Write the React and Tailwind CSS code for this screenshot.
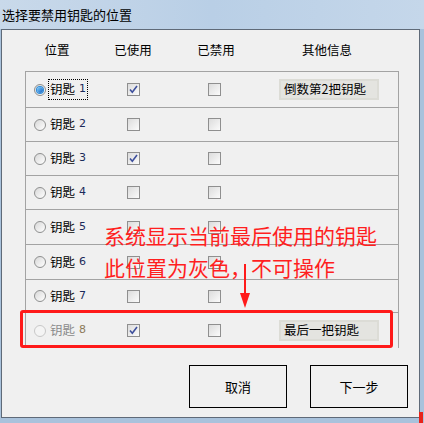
const rows = [
  { n: 1, used: true, info: "倒数第2把钥匙", selected: true, h: "h-[36px]" },
  { n: 2, used: false, h: "h-[34px]" },
  { n: 3, used: true, h: "h-[34px]" },
  { n: 4, used: false, h: "h-[34px]" },
  { n: 5, used: false, h: "h-[35px]" },
  { n: 6, used: false, h: "h-[35px]" },
  { n: 7, used: false, h: "h-[33px]" },
];

const cjk = { fontFamily: '"Noto Sans CJK SC", "Liberation Sans", sans-serif' };

const Radio = ({ checked, disabled }) => (
  <span
    className={`flex h-[12px] w-[12px] items-center justify-center rounded-full border ${
      disabled ? "border-[#c8c8c8] bg-[#f4f4f4]" : "border-[#8e8f8f] bg-gradient-to-br from-[#d8d8d8] to-[#ffffff]"
    }`}
  >
    {checked && (
      <span className="h-[6px] w-[6px] rounded-full bg-gradient-to-br from-[#7fd0ff] to-[#0b5fbf] ring-1 ring-[#2a8ad8]" />
    )}
  </span>
);

const Check = ({ checked }) => (
  <span className="flex h-[13px] w-[13px] items-center justify-center border border-[#8f8f8f] bg-gradient-to-br from-[#dcdcdc] to-[#fbfbfb]">
    {checked && (
      <svg width="9" height="9" viewBox="0 0 9 9">
        <path d="M1 4.5 L3.3 7.2 L8 1" fill="none" stroke="#3d4f9c" strokeWidth="1.6" />
      </svg>
    )}
  </span>
);

const InfoBox = ({ text }) => (
  <div className="flex h-[21px] w-[100px] items-center border-2 border-[#dcdcd6] bg-[#e4e4e0] pl-[3px] text-[12.5px] text-black">
    {text}
  </div>
);

const Row = ({ r, disabled }) => (
  <div className={`flex ${r.h} w-[374px] items-center border-x border-t border-[#a3a3a3]`}>
    <div className="flex w-[101px] items-center pl-[8px]">
      <Radio checked={r.selected} disabled={disabled} />
      <span
        className={`ml-[3px] flex items-center px-[1px] text-[12.5px] ${
          r.selected ? "outline outline-1 outline-dotted outline-black" : ""
        } ${disabled ? "text-[#8a8a8a]" : "text-black"}`}
      >
        钥匙
        <span className={`ml-[4px] text-[11px] ${disabled ? "text-[#8c7a5a]" : "text-[#1b2a5a]"}`} style={{ fontFamily: '"DejaVu Sans", sans-serif' }}>
          {r.n}
        </span>
      </span>
    </div>
    <div className="w-[81px]">
      <Check checked={r.used} />
    </div>
    <div className="w-[71px]">
      <Check />
    </div>
    {r.info && <InfoBox text={r.info} />}
  </div>
);

export default function App() {
  return (
    <div className="relative h-[423px] w-[424px] overflow-hidden bg-[#a9c2dc]" style={cjk}>
      <div className="flex h-[29px] items-center bg-gradient-to-r from-[#c9d9ea] via-[#b9cfe6] to-[#c5d7ea] pl-[2px] text-[13px] text-black">
        选择要禁用钥匙的位置
      </div>
      <div className="ml-[1px] flex h-[389px] w-[419px] flex-col border border-[#5f6a78] bg-[#f0f0f0]">
        <div className="flex h-[41px] items-center pl-[23px] text-[12.5px] text-black">
          <span className="w-[64px] text-center">位置</span>
          <span className="w-[88px] text-center">已使用</span>
          <span className="w-[78px] text-center">已禁用</span>
          <span className="w-[144px] text-center">其他信息</span>
        </div>
        <div className="flex flex-col pl-[23px]">
          {rows.map((r) => (
            <Row key={r.n} r={r} />
          ))}
          <Row r={{ n: 8, used: true, info: "最后一把钥匙", h: "h-[36px]" }} disabled />
        </div>
        <div className="mt-[17px] flex gap-[23px] pl-[187px]">
          <button className="h-[43px] w-[98px] border border-black bg-[#f0f0f0] text-[13px] text-black">取消</button>
          <button className="h-[43px] w-[98px] border border-black bg-[#f0f0f0] text-[13px] text-black">下一步</button>
        </div>
      </div>

      {/* annotations */}
      <div className="pointer-events-none absolute left-[20px] top-[310px] h-[38px] w-[373px] rounded-[3px] border-[3px] border-[#ff1a1a]" />
      <div className="pointer-events-none absolute left-[104px] top-[219px] text-[21px] leading-[32px] text-[#ff1f1f]">
        <div>系统显示当前最后使用的钥匙</div>
        <div>此位置为灰色，不可操作</div>
      </div>
      <svg className="pointer-events-none absolute left-[237px] top-[264px]" width="16" height="45" viewBox="0 0 16 45">
        <path d="M8 0 L8 32" stroke="#ff1a1a" strokeWidth="2" />
        <path d="M3 29 L13 29 L8 44 Z" fill="#ff1a1a" />
      </svg>
      <div className="absolute left-[419px] top-[412px] h-[11px] w-[4px] bg-[#e8231a]" />
    </div>
  );
}
